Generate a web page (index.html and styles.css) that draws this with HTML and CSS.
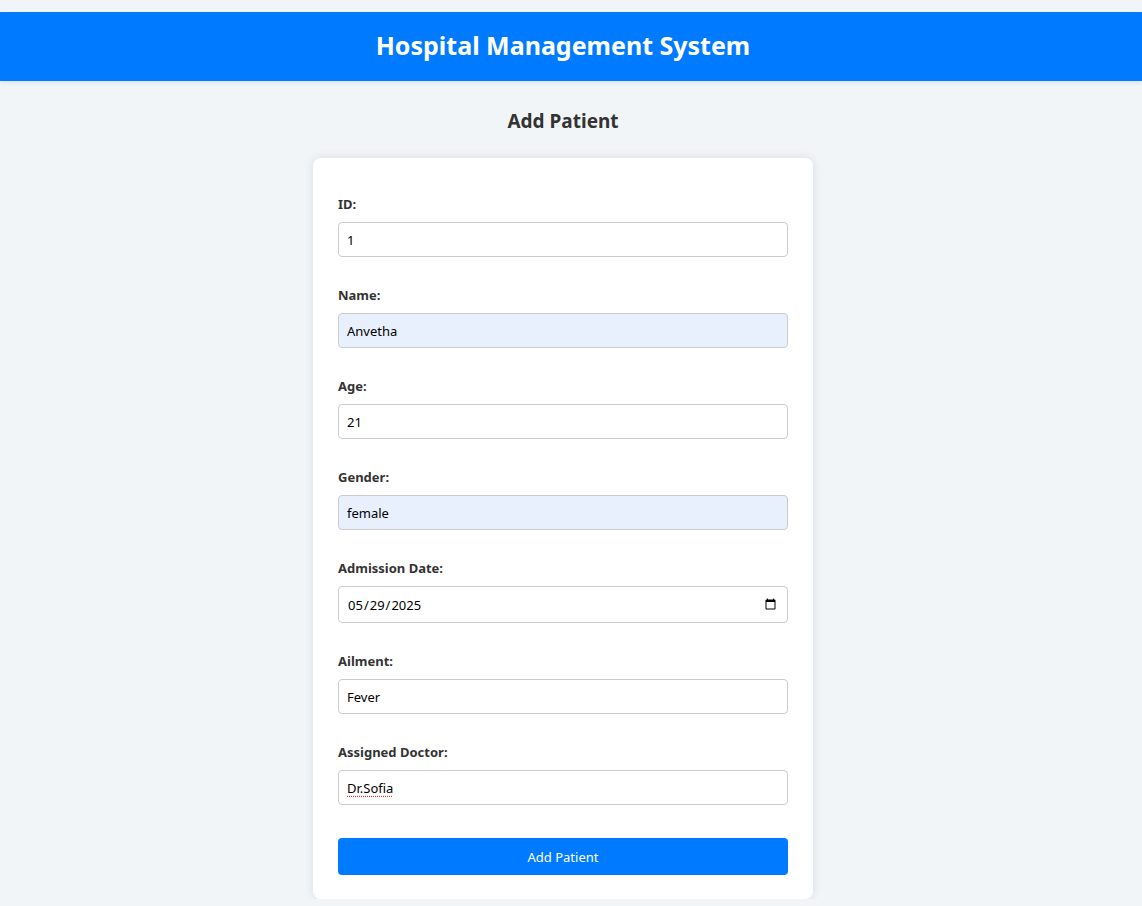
FILE: index.html
```html
<!DOCTYPE html>
<html lang="en">
<head>
<meta charset="utf-8">
<title>Hospital Management System</title>
<link rel="stylesheet" href="styles.css">
</head>
<body>
<header class="topbar">
  <h1 class="topbar-title">Hospital Management System</h1>
</header>
<main class="page">
  <h2 class="page-title">Add Patient</h2>
  <form class="card">
    <div class="field">
      <label class="field-label" for="pid">ID:</label>
      <input class="field-input" id="pid" type="text" value="1">
    </div>
    <div class="field">
      <label class="field-label" for="pname">Name:</label>
      <input class="field-input autofilled" id="pname" type="text" value="Anvetha">
    </div>
    <div class="field">
      <label class="field-label" for="page">Age:</label>
      <input class="field-input" id="page" type="text" value="21">
    </div>
    <div class="field">
      <label class="field-label" for="pgender">Gender:</label>
      <input class="field-input autofilled" id="pgender" type="text" value="female">
    </div>
    <div class="field">
      <label class="field-label" for="pdate">Admission Date:</label>
      <input class="field-input date-input" id="pdate" type="date" value="2025-05-29">
    </div>
    <div class="field">
      <label class="field-label" for="pailment">Ailment:</label>
      <input class="field-input" id="pailment" type="text" value="Fever">
    </div>
    <div class="field">
      <label class="field-label" for="pdoctor">Assigned Doctor:</label>
      <input class="field-input misspelled" id="pdoctor" type="text" value="Dr.Sofia">
    </div>
    <button class="submit-btn" type="button">Add Patient</button>
  </form>
</main>
</body>
</html>
```

FILE: styles.css
```css
* { box-sizing: border-box; }

html, body {
  margin: 0;
  padding: 0;
}

body {
  background: #f2f5f8;
  font-family: "Noto Sans", "Open Sans", sans-serif;
  color: #333;
  padding-top: 12px;
}

.topbar {
  background: #007bff;
  height: 69px;
  display: flex;
  align-items: center;
  justify-content: center;
  padding-right: 16px;
  box-shadow: 0 2px 4px rgba(0, 0, 0, 0.08);
}

.topbar-title {
  margin: 0;
  color: #fff;
  font-size: 25px;
  font-weight: 700;
  line-height: 1;
  padding-bottom: 2px;
}

.page {
  display: flex;
  flex-direction: column;
  align-items: center;
  padding-right: 16px;
}

.page-title {
  margin: 28px 0 0;
  height: 49px;
  font-size: 19px;
  line-height: 24px;
  font-weight: 700;
  color: #333;
}

.card {
  width: 500px;
  background: #fff;
  border-radius: 8px;
  box-shadow: 0 0 10px rgba(0, 0, 0, 0.1);
  padding: 38px 25px 24px;
  display: flex;
  flex-direction: column;
}

.field {
  display: flex;
  flex-direction: column;
  margin-bottom: 30px;
}

.field:last-of-type {
  margin-bottom: 33px;
}

.field-label {
  font-size: 13px;
  line-height: 16px;
  font-weight: 700;
  color: #333;
  margin-bottom: 10px;
}

.field-input {
  height: 35px;
  width: 100%;
  border: 1px solid #ccc;
  border-radius: 4px;
  padding: 0 8px;
  font-family: "Noto Sans", "Open Sans", sans-serif;
  font-size: 13px;
  color: #000;
  background: #fff;
  outline: none;
}

.date-input {
  height: 37px;
}

.autofilled {
  background: #e8f0fe;
}

.misspelled {
  text-decoration-line: underline;
  text-decoration-style: dotted;
  text-decoration-color: #e0302a;
  text-underline-offset: 3px;
}

.submit-btn {
  height: 37px;
  width: 100%;
  border: none;
  border-radius: 4px;
  background: #007bff;
  color: #fff;
  font-family: "Noto Sans", "Open Sans", sans-serif;
  font-size: 13px;
  cursor: pointer;
}
```
